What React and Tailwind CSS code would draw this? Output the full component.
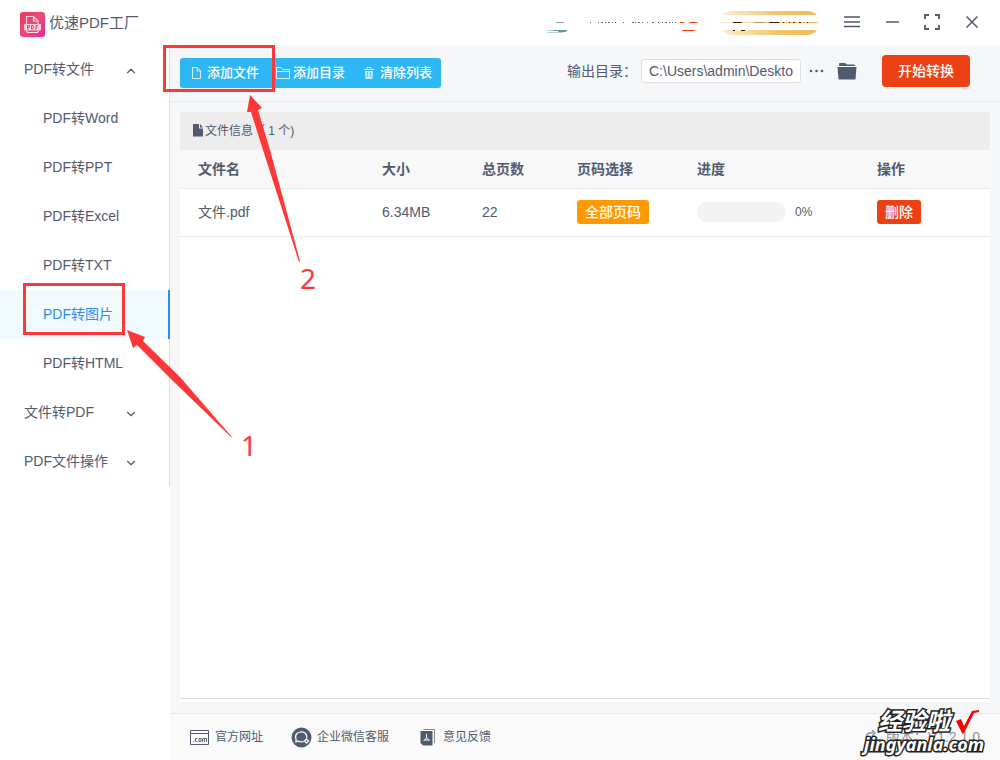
import React, { useState } from 'react'
import { ChevronDown, ChevronUp } from 'lucide-react'

const groups = [
  { name: 'PDF转文件', open: true, items: ['PDF转Word', 'PDF转PPT', 'PDF转Excel', 'PDF转TXT', 'PDF转图片', 'PDF转HTML'] },
  { name: '文件转PDF', open: false, items: [] },
  { name: 'PDF文件操作', open: false, items: [] },
]

const files = [{ name: '文件.pdf', size: '6.34MB', pages: 22, progress: 0 }]

const Logo = () => (
  <svg className="mt-1" width="25" height="25" viewBox="0 0 25 25" aria-hidden="true">
    <defs>
      <linearGradient id="logo" x1="0" y1="0" x2="1" y2="1">
        <stop offset="0" stopColor="#e8395a" />
        <stop offset="0.5" stopColor="#ec4a78" />
        <stop offset="1" stopColor="#e52aa0" />
      </linearGradient>
    </defs>
    <rect width="25" height="25" rx="3" fill="url(#logo)" />
    <g fill="none" stroke="#fbd3dc" strokeWidth="1.2">
      <path d="M6.500 12V4.500H13.500L18 9V12M13.500 4.500V9H18" />
      <path d="M6.500 18.500L7.500 20.500H17.500L18.500 18.500" />
    </g>
    <rect x="4" y="12" width="17" height="6.500" rx="1" fill="#fbd3dc" />
    <path d="M7.500 17.500V13.500H9.500V15.500H7.500M11.500 13.500H13L13.500 15.500L13 17H11.500zM18 13.500H16V17.500M16 15.500H17.500" fill="none" stroke="#e8446e" />
  </svg>
)

const FileIcon = () => (
  <svg className="opacity-80" width="9" height="12" viewBox="0 0 9 12" fill="none" stroke="currentColor" aria-hidden="true">
    <path d="M.5 .5H5L8.500 3.500V11.500H.5zM5 .5V4H8.500" />
  </svg>
)

const FolderIcon = () => (
  <svg className="opacity-80" width="14" height="12" viewBox="0 0 14 12" fill="none" stroke="currentColor" aria-hidden="true">
    <path d="M.5 11.500V.5H5l1.500 2H13.500V11.500zM.5 4.500h13" />
  </svg>
)

const TrashIcon = () => (
  <svg className="opacity-70" width="10" height="12" viewBox="0 0 10 12" aria-hidden="true">
    <path d="M3 2V.5h4V2M0 2.500h10" fill="none" stroke="currentColor" />
    <path d="M1 4h8l-.5 8h-7z" fill="currentColor" />
    <path d="M3.500 5v5M6.500 5v5" stroke="#2db7f5" strokeWidth=".7" />
  </svg>
)

// leftovers of the account name and the member badge
const AccountStrip = () => (
  <svg width="274" height="28" viewBox="0 0 274 28" aria-hidden="true">
    <defs>
      <linearGradient id="gold">
        <stop offset="0" stopColor="#fbeed6" />
        <stop offset="0.6" stopColor="#f1c566" />
        <stop offset="1" stopColor="#eebb58" />
      </linearGradient>
    </defs>
    <path d="M10 13.500h8" stroke="#7fa3a8" />
    <path d="M0 21.500h7M1 23.500h16" stroke="#b9d5d6" />
    <path d="M7 21.500h14M12 22.500h8" stroke="#5f9ba0" />
    <path d="M44 13.500h1M52 13.500h1M55 13.500h2M59 13.500h1M62 13.500h2M66 13.500h1M69 13.500h1M77 13.500h1M86 13.500h2M89 13.500h1M92 13.500h2M96 13.500h1M101 13.500h1M106 13.500h2M112 13.500h1M116 13.500h1M119 13.500h2M123 13.500h1M126 13.500h1M129 13.500h1" stroke="#5d6478" />
    <path d="M134 13.500h4M143 13.500h8M136 21.500h13" stroke="#ee3f16" />
    <path d="M176 6Q180 2 187 2H260Q267 2 271 6zM176 21H271Q267 26 260 26H187Q180 26 176 21z" fill="url(#gold)" />
    <rect x="174" y="13" width="98" height="1" fill="url(#gold)" />
    <path d="M187 13.500h9M223 13.500h10M237 13.500h1M243 13.500h1M247 13.500h2M253 13.500h2M261 13.500h1M187 21.500h2M195 21.500h4" stroke="#4a1612" />
    <path d="M208 13.500h12" stroke="#b59a6a" />
  </svg>
)

const Header = () => (
  <header className="flex h-[45px] shrink-0 items-center bg-white px-5">
    <Logo />
    <h1 className="ml-1 flex-1 text-[15px] leading-5">优速PDF工厂</h1>
    <AccountStrip />
    <div className="ml-6 flex items-center gap-6 pb-[2px]">
      <button type="button" aria-label="菜单" className="flex w-4 justify-center">
        <svg width="16" height="12" viewBox="0 0 16 12" stroke="currentColor" strokeWidth="1.500"><path d="M0 1h16M0 6h16M0 10.500h16" /></svg>
      </button>
      <button type="button" aria-label="最小化" className="flex w-4 justify-center">
        <svg width="13" height="12" viewBox="0 0 13 12" stroke="currentColor" strokeWidth="1.500"><path d="M0 6h13" /></svg>
      </button>
      <button type="button" aria-label="最大化" className="flex w-4 justify-center">
        <svg width="16" height="16" viewBox="0 0 16 16" fill="none" stroke="currentColor" strokeWidth="1.800"><path d="M1 5V1H5M11 1h4V5M15 11v4H11M5 15H1V11" /></svg>
      </button>
      <button type="button" aria-label="关闭" className="flex w-4 justify-center">
        <svg width="12" height="12" viewBox="0 0 12 12" stroke="currentColor" strokeWidth="1.500"><path d="M.5 .5l11 11M11.500 .5l-11 11" /></svg>
      </button>
    </div>
  </header>
)

const Sidebar = ({ active, setActive }) => (
  <nav className="w-[170px] shrink-0 bg-white text-sm">
    <div className="border-r border-[#dcdee2]">
      {groups.map((group) => (
        <div key={group.name}>
          <button type="button" aria-expanded={group.open} className="flex h-[49px] w-full items-center justify-between pb-[2px] pl-6 pr-[31px]">
            {group.name}
            {group.open ? <ChevronUp size={14} className="mt-1" /> : <ChevronDown size={14} className="mt-1" />}
          </button>
          {group.items.map((item) => (
            <button
              key={item}
              type="button"
              onClick={() => setActive(item)}
              className={`-mr-px flex h-[49px] w-[170px] items-center pb-[2px] pl-[43px] ${active === item ? 'border-r-2 border-[#2d8cf0] bg-[#f0faff] text-[#2d8cf0]' : ''}`}
            >
              {item}
            </button>
          ))}
        </div>
      ))}
    </div>
  </nav>
)

const Toolbar = () => (
  <div className="flex h-[57px] shrink-0 items-center border-b border-[#e8eaec] pb-1 pl-[10px] pr-[30px]">
    <div className="mt-1 flex h-[30px] overflow-hidden rounded-[3px] bg-[#2db7f5] text-[13px] font-medium text-white">
      <button type="button" className="flex items-center gap-[6px] pl-3 pr-2"><FileIcon />添加文件</button>
      <button type="button" className="flex items-center gap-[3px] px-[9px]"><FolderIcon />添加目录</button>
      <button type="button" className="flex items-center gap-[6px] pl-[10px] pr-[9px]"><TrashIcon />清除列表</button>
    </div>
    <label htmlFor="output" className="ml-auto pb-px text-sm">输出目录：</label>
    <input id="output" readOnly defaultValue="C:\Users\admin\Deskto" className="ml-1 h-6 w-40 rounded-[3px] border border-[#dcdee2] bg-white px-[7px] text-sm outline-none" />
    <button type="button" aria-label="更多" className="ml-2">
      <svg width="16" height="4" viewBox="0 0 16 4" fill="currentColor"><circle cx="2" cy="2" r="1.300" /><circle cx="7.500" cy="2" r="1.300" /><circle cx="13" cy="2" r="1.300" /></svg>
    </button>
    <button type="button" aria-label="打开目录" className="ml-3">
      <svg width="20" height="18" viewBox="0 0 20 18" fill="currentColor"><path d="M2 4V2Q2 1 3 1H8L10 2.500H17Q18 2.500 18 4zM.500 5H19.500L18.500 17Q18.500 17.500 18 17.500H2Q1.500 17.500 1.500 17z" /></svg>
    </button>
    <button type="button" className="ml-[25px] h-8 w-[88px] rounded bg-[#ed4014] text-sm font-medium text-white">开始转换</button>
  </div>
)

const FileTable = () => (
  <section className="mx-[10px] mt-[10px] flex min-h-0 flex-1 flex-col bg-white pb-[3px]">
    <h2 className="flex h-[38px] shrink-0 items-center gap-px bg-[#ededed] pl-3 text-xs">
      <svg className="mb-px" width="12" height="13" viewBox="0 0 12 13" fill="currentColor" aria-hidden="true"><path d="M1 0H7V4.500H11V12.500H1zM8 0L11 3.500H8z" /></svg>
      文件信息（ 1 个)
    </h2>
    <div className="flex-1 border-b border-[#dcdee2]">
      <table className="w-full table-fixed border-collapse text-left text-sm">
        <thead>
          <tr className="h-[38px] border-b border-[#e8eaec] bg-[#f8f8f9]">
            <th className="w-[184px] pl-[18px] font-bold">文件名</th>
            <th className="w-[100px] pl-[18px] font-bold">大小</th>
            <th className="w-[95px] pl-[18px] font-bold">总页数</th>
            <th className="w-[120px] pl-[18px] font-bold">页码选择</th>
            <th className="w-[180px] pl-[18px] font-bold">进度</th>
            <th className="pl-[18px] font-bold">操作</th>
          </tr>
        </thead>
        <tbody>
          {files.map((file) => (
            <tr key={file.name} className="h-12 border-b border-[#e8eaec]">
              <td className="pl-[18px]">{file.name}</td>
              <td className="pl-[18px]">{file.size}</td>
              <td className="pl-[18px]">{file.pages}</td>
              <td className="pl-[18px]">
                <button type="button" className="block h-6 w-[72px] rounded-[3px] bg-[#ff9900] font-medium text-white">全部页码</button>
              </td>
              <td className="pl-[18px]">
                <div className="flex items-center gap-[9px]">
                  <div className="h-5 w-[89px] overflow-hidden rounded-full bg-[#f3f3f3]">
                    <div className="h-full bg-[#2db7f5]" style={{ width: `${file.progress}%` }} />
                  </div>
                  <span className="text-xs">{file.progress}%</span>
                </div>
              </td>
              <td className="pl-[18px]">
                <button type="button" className="block h-6 w-11 rounded-[3px] bg-[#ed4014] font-medium text-white">删除</button>
              </td>
            </tr>
          ))}
        </tbody>
      </table>
    </div>
  </section>
)

const Footer = () => (
  <footer className="relative mt-[11px] flex h-[47px] shrink-0 items-center border-t border-[#e8eaec] bg-[#fafafa] px-5 text-xs">
    <a href="#site" className="flex items-center gap-[6px]">
      <svg width="19" height="15" viewBox="0 0 19 15" fill="none" stroke="currentColor" aria-hidden="true">
        <path d="M.5 .5h18v14H.5zM.5 3.500h18" />
        <path d="M3 11.500h1M7.500 8.500H5.500v3H7.500M9 8.500h2v3H9zM12.500 12V8.500H16.500V12M14.500 8.500V12" strokeWidth=".9" />
      </svg>
      官方网址
    </a>
    <a href="#service" className="ml-7 flex items-center gap-[5px]">
      <svg width="21" height="21" viewBox="0 0 21 21" aria-hidden="true">
        <circle cx="10.500" cy="10.500" r="10" fill="currentColor" />
        <g fill="none" stroke="#fafafa" strokeWidth="1.300">
          <path d="M13 14.500Q9.500 15.500 7 14L5 15V12Q3.500 9 6 6.500Q10 3.500 14 6Q16.500 8.500 15.500 11" />
          <path d="M15.500 12l2 2l-2 2l-2-2z" />
        </g>
      </svg>
      企业微信客服
    </a>
    <a href="#feedback" className="ml-[31px] flex items-center gap-2">
      <svg width="15" height="17" viewBox="0 0 15 17" aria-hidden="true">
        <path d="M3.500 .5H14.500V14" fill="none" stroke="currentColor" opacity=".7" />
        <path d="M.5 2H12.500V16.500H3L.5 14z" fill="currentColor" />
        <path d="M6.500 5V9M6.500 9L3.500 12M6.500 9L10 11.500M4 11H9" fill="none" stroke="#fafafa" />
      </svg>
      意见反馈
    </a>
    <span className="ml-auto flex items-center gap-2 text-sm text-[#8d93a3]">
      <svg width="13" height="14" viewBox="0 0 13 14" fill="none" stroke="currentColor" strokeWidth="1.500" aria-hidden="true"><path d="M1 7Q2 2 8 3M7 0l3 3l-3 3M12 7Q11 12 5 11" /></svg>
      版本：V1.2.1.0
    </span>
    <div className="absolute -top-1 right-4 flex flex-col items-end font-bold text-white [paint-order:stroke_fill] [-webkit-text-stroke:3px_#222]">
      <div className="flex items-center gap-1 pr-1">
        <span className="text-2xl leading-6 italic">经验啦</span>
        <svg width="26" height="24" viewBox="0 0 26 24" fill="#f00" aria-hidden="true"><path d="M2 11L7 9L10 16L18 1L25 0V2L20 3L10 23H8z" /></svg>
      </div>
      <span className="font-['Noto_Sans'] text-lg leading-5 italic">jingyanla.com</span>
    </div>
  </footer>
)

// numbered steps drawn over the window
const Steps = () => (
  <div className="pointer-events-none absolute left-0 top-0 text-[#fc3938]">
    <div className="absolute left-[163px] top-[45px] h-[47px] w-[112px] border-3 border-current" />
    <div className="absolute left-[23px] top-[283px] h-[52px] w-[102px] border-3 border-current" />
    <svg className="absolute left-0 top-0" width="330" height="450" fill="currentColor" aria-hidden="true">
      <path d="M250 95L262 108L258 110L270 150L300 261L299 262L263 150L251 112L247 112z" />
      <path d="M127 330L145 337L143 341L180 377L232 437L231 437L174 382L137 345L133 348z" />
    </svg>
    <span className="absolute left-[300px] top-[260px] font-['Noto_Sans'] text-[28px] leading-9">2</span>
    <span className="absolute left-[241px] top-[427px] font-['Noto_Sans'] text-[28px] leading-9">1</span>
  </div>
)

export default function App() {
  const [active, setActive] = useState('PDF转图片')

  return (
    <div className="relative flex h-screen flex-col overflow-hidden bg-white font-['Liberation_Sans','Noto_Sans_CJK_SC',sans-serif] text-[#515a6e]">
      <Header />
      <div className="flex min-h-0 flex-1">
        <Sidebar active={active} setActive={setActive} />
        <main className="flex min-w-0 flex-1 flex-col bg-[#f5f7f9]">
          <Toolbar />
          <FileTable />
          <Footer />
        </main>
      </div>
      <Steps />
    </div>
  )
}
